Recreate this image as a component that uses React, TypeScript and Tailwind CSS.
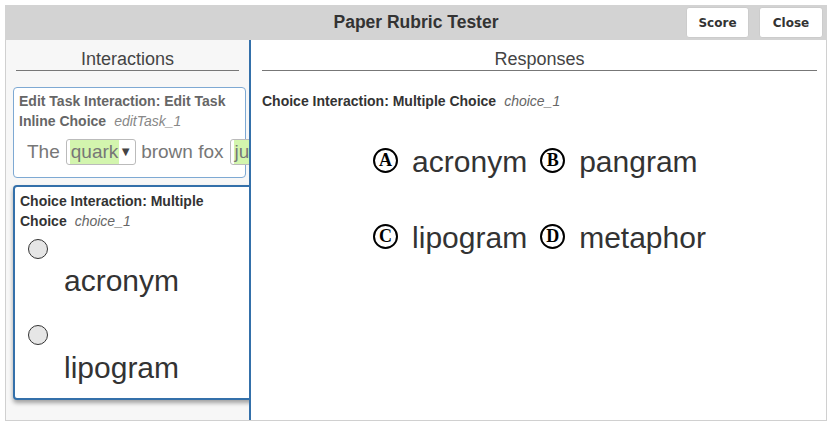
import React from "react";

const sans = "font-['Liberation_Sans',Arial,sans-serif]";

function Circled({ letter }: { letter: string }) {
  return (
    <span className="inline-flex h-[25px] w-[25px] shrink-0 items-center justify-center rounded-full border-2 border-black font-['Liberation_Serif',serif] text-[18px] font-bold leading-none text-black">
      {letter}
    </span>
  );
}

function Radio() {
  return <span className="block h-[20px] w-[20px] rounded-full border border-[#333] bg-[#e6e6e6]" />;
}

function Heading({ children }: { children: React.ReactNode }) {
  return (
    <div className="border-b border-[#777] pt-[9px] pb-[1px] text-center text-[18px] leading-[20px] text-[#444]">
      {children}
    </div>
  );
}

const choices = [
  { letter: "A", text: "acronym" },
  { letter: "B", text: "pangram" },
  { letter: "C", text: "lipogram" },
  { letter: "D", text: "metaphor" },
];

export default function App() {
  return (
    <div className={`h-[427px] w-[831px] bg-white p-[5px] ${sans}`}>
      <div className="flex h-[416px] w-[822px] flex-col">
        <header className="grid h-[35px] grid-cols-[1fr_auto_1fr] items-center bg-[#d3d3d3]">
          <div />
          <h1 className="text-[17.5px] font-bold text-[#333]">Paper Rubric Tester</h1>
          <div className="flex justify-end gap-[10px] pr-[4px]">
            <button className="h-[31px] w-[63px] rounded-[3px] border border-[#ccc] bg-white font-['DejaVu_Sans',sans-serif] text-[12px] font-bold text-[#333]">
              Score
            </button>
            <button className="h-[31px] w-[64px] rounded-[3px] border border-[#ccc] bg-white font-['DejaVu_Sans',sans-serif] text-[12px] font-bold text-[#333]">
              Close
            </button>
          </div>
        </header>

        <div className="flex min-h-0 flex-1 border border-t-0 border-[#d0d0d0]">
          {/* interactions */}
          <aside className="w-[243px] shrink-0 overflow-hidden bg-[#f7f7f7]">
            <div className="mx-[10px]">
              <Heading>Interactions</Heading>
            </div>
            <div className="px-[7px] pt-[16px]">
              <div className="w-[233px] rounded-[4px] border border-[#7ea9d3] bg-white px-[5px] pt-[3px] pb-[12px]">
                <div className="text-[14px] font-bold leading-[20px] text-[#666]">
                  Edit Task Interaction: Edit Task Inline Choice
                  <span className="ml-[8px] font-normal italic text-[#888]">editTask_1</span>
                </div>
                <div className="mt-[8px] flex items-center whitespace-nowrap pl-[8px] text-[19px] leading-[24px] text-[#777]">
                  <span>The</span>
                  <span className="ml-[6px] flex h-[26px] items-center rounded-[3px] border border-[#bbb] px-[3px]">
                    <span className="bg-[#d3f5ae] px-[1px]">quark</span>
                    <span className="text-[13px] text-[#444]">▼</span>
                  </span>
                  <span className="ml-[5px]">brown fox</span>
                  <span className="ml-[6px] flex h-[26px] items-center rounded-[3px] border border-[#bbb] px-[3px]">
                    <span className="bg-[#d3f5ae] px-[1px]">jumps</span>
                  </span>
                </div>
              </div>

              <div className="mt-[7px] w-[260px] rounded-[4px] border-2 border-[#3470aa] bg-white px-[5px] pt-[4px] pb-[14px] shadow-[0_3px_4px_rgba(0,0,0,0.35)]">
                <div className="w-[200px] text-[14px] font-bold leading-[20px] text-[#333]">
                  Choice Interaction: Multiple Choice
                  <span className="ml-[8px] font-normal italic text-[#666]">choice_1</span>
                </div>
                <div className="ml-[8px] mt-[8px]">
                  <Radio />
                </div>
                <div className="ml-[44px] mt-[6px] text-[30px] leading-[32px] text-[#333]">acronym</div>
                <div className="ml-[8px] mt-[28px]">
                  <Radio />
                </div>
                <div className="ml-[44px] mt-[7px] text-[30px] leading-[32px] text-[#333]">lipogram</div>
              </div>
            </div>
          </aside>

          <div className="w-[2px] shrink-0 bg-[#3470aa]" />

          {/* responses */}
          <main className="flex-1 bg-white pl-[11px] pr-[9px]">
            <Heading>Responses</Heading>
            <div className="mt-[20px] text-[14px] font-bold leading-[20px] text-[#333]">
              Choice Interaction: Multiple Choice
              <span className="ml-[8px] font-normal italic text-[#666]">choice_1</span>
            </div>
            <div className="mt-[35px] grid grid-cols-[auto_auto] justify-center gap-x-[13px] gap-y-[44px]">
              {choices.map((c) => (
                <div key={c.letter} className="flex items-center gap-[14px]">
                  <span className="-mt-[3px]">
                    <Circled letter={c.letter} />
                  </span>
                  <span className="text-[30px] leading-[32px] text-[#333]">{c.text}</span>
                </div>
              ))}
            </div>
          </main>
        </div>
      </div>
    </div>
  );
}
